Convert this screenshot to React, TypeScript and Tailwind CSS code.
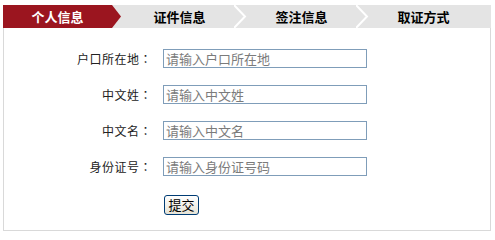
import type { ReactNode } from 'react';

const tabs = ['个人信息', '证件信息', '签注信息', '取证方式'];

const fields = [
  { label: '户口所在地', placeholder: '请输入户口所在地' },
  { label: '中文姓', placeholder: '请输入中文姓' },
  { label: '中文名', placeholder: '请输入中文名' },
  { label: '身份证号', placeholder: '请输入身份证号码' },
];

function Tab({ index, children }: { index: number; children: ReactNode }) {
  const active = index === 0;
  const last = index === tabs.length - 1;
  return (
    <div className="flex w-[122px] h-full">
      <div
        className={`w-[109px] h-full flex items-center justify-center text-[13px] font-bold ${
          active ? 'bg-[#9b151f] text-white' : 'text-black'
        }`}
      >
        {children}
      </div>
      {!last && (
        <svg width="13" height="23" viewBox="0 0 13 23" className="shrink-0">
          {active ? (
            <polygon points="0,0 9,11.5 0,23" fill="#9b151f" />
          ) : (
            <polyline points="0,0 11,11.5 0,23" fill="none" stroke="#ffffff" strokeWidth="2" />
          )}
        </svg>
      )}
    </div>
  );
}

export default function App() {
  return (
    <div className="min-h-[235px] bg-white pt-[5px] font-['Noto_Sans_CJK_SC',sans-serif]">
      <div className="ml-[3px] w-[488px]">
        {/* Step tabs */}
        <div className="flex h-[23px] bg-[#e4e4e4]">
          {tabs.map((t, i) => (
            <Tab key={t} index={i}>
              {t}
            </Tab>
          ))}
        </div>

        {/* Form panel */}
        <div className="h-[203px] border-x border-b border-[#d9d9d9] pt-[21px]">
          <div className="flex flex-col gap-[17px]">
            {fields.map((f) => (
              <div key={f.label} className="flex items-center h-[19px]">
                <label className="w-[148px] text-right text-[12px] tracking-[0.5px] text-[#222]">
                  {f.label}
                  <span className="font-['Noto_Sans_CJK_JP',sans-serif]">：</span>
                </label>
                <input
                  type="text"
                  placeholder={f.placeholder}
                  className="ml-[11px] w-[204px] h-[19px] border border-[#7f9db9] px-[2px] text-[13px] outline-none placeholder:text-[#7b7b7b]"
                />
              </div>
            ))}
          </div>
          <div className="mt-[15px] pl-[160px]">
            <button className="w-[35px] h-[20px] rounded-[3px] border border-[#003c74] bg-gradient-to-b from-white to-[#e6e3d6] text-[13px] leading-none text-black">
              提交
            </button>
          </div>
        </div>
      </div>
    </div>
  );
}
